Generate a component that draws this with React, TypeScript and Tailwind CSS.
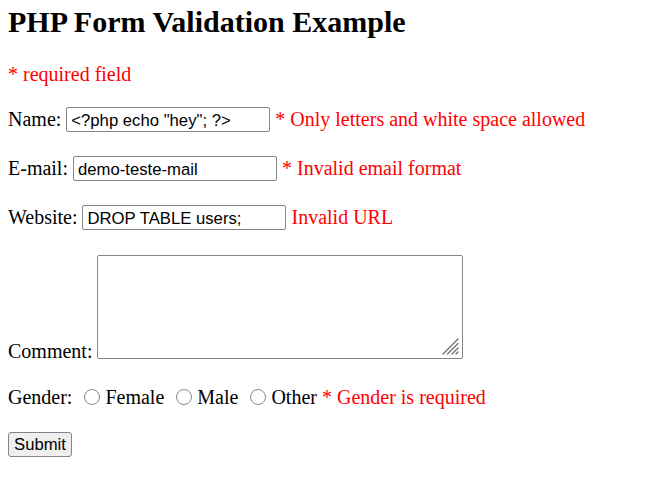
import React from 'react';

const serif = "font-['Liberation_Serif','Times_New_Roman',serif]";
const sans = "font-['Liberation_Sans',Arial,sans-serif]";

const TextInput = ({ value }: { value: string }) => (
  <input
    type="text"
    defaultValue={value}
    className={`${sans} box-border h-[25px] w-[204px] rounded-[2px] border border-[#858585] bg-white px-[4px] pb-0 pt-[2px] text-[16.7px] leading-[19px] text-black outline-none`}
  />
);

const Radio = ({ name }: { name: string }) => (
  <input
    type="radio"
    name={name}
    className="m-0 mb-[4px] ml-[12px] mr-[5px] box-border h-[16px] w-[16px] appearance-none rounded-full border border-[#8a8a8a] bg-white"
  />
);

// the textarea resize grip, drawn over the bottom-right corner
const Grip = () => (
  <svg
    className="pointer-events-none absolute bottom-[4px] right-[4px]"
    width="17"
    height="17"
    viewBox="0 0 17 17"
  >
    <g stroke="#6e6e6e" strokeWidth="1.3" strokeLinecap="round">
      <line x1="16" y1="1" x2="1" y2="16" />
      <line x1="16" y1="5.5" x2="5.5" y2="16" />
      <line x1="16" y1="10" x2="10" y2="16" />
      <line x1="16" y1="14" x2="14" y2="16" />
    </g>
  </svg>
);

export default function App() {
  return (
    <div className={`${serif} min-h-[480px] w-full bg-white px-2 text-[20px] text-black`}>
      <h2 className="mt-[4px] text-[30px] font-bold leading-[36px]">PHP Form Validation Example</h2>

      <p className="mt-[22px] leading-[24px] text-[#ff0000]">* required field</p>

      <form className="flex flex-col" onSubmit={(e) => e.preventDefault()}>
        {/* Name */}
        <div className="mt-[21px] flex items-baseline gap-[5px]">
          <span className="leading-[20px]">Name:</span>
          <TextInput value={'<?php echo "hey"; ?>'} />
          <span className="leading-[20px] text-[#ff0000]">* Only letters and white space allowed</span>
        </div>

        {/* E-mail */}
        <div className="mt-[24px] flex items-baseline gap-[5px]">
          <span className="leading-[20px]">E-mail:</span>
          <TextInput value="demo-teste-mail" />
          <span className="leading-[20px] text-[#ff0000]">* Invalid email format</span>
        </div>

        {/* Website */}
        <div className="mt-[24px] flex items-baseline gap-[5px]">
          <span className="leading-[20px]">Website:</span>
          <TextInput value="DROP TABLE users;" />
          <span className="leading-[20px] text-[#ff0000]">Invalid URL</span>
        </div>

        {/* Comment */}
        <div className="mt-[25px] flex items-end gap-[5px]">
          <span className="leading-[16px]">Comment:</span>
          <div className="relative h-[104px] w-[366px]">
            <textarea className="box-border block h-full w-full resize-none rounded-[2px] border border-[#858585] bg-white outline-none" />
            <Grip />
          </div>
        </div>

        {/* Gender */}
        <div className="mt-[26px] flex h-[24px] items-end leading-[24px]">
          <span>Gender:</span>
          <Radio name="gender" />
          <span>Female</span>
          <Radio name="gender" />
          <span>Male</span>
          <Radio name="gender" />
          <span>Other</span>
          <span className="ml-[5px] text-[#ff0000]">* Gender is required</span>
        </div>

        <div className="mt-[23px] flex">
          <button
            type="submit"
            className={`${sans} box-border h-[25px] rounded-[3px] border border-[#858585] bg-[#efefef] px-[5px] text-[16.7px] leading-[19px] text-black`}
          >
            Submit
          </button>
        </div>
      </form>
    </div>
  );
}
